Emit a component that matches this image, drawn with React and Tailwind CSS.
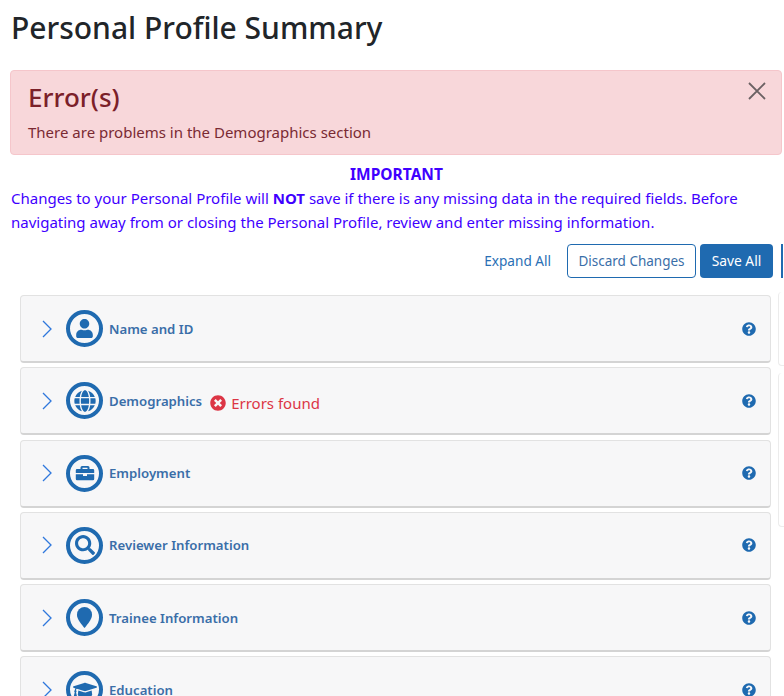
import React from "react";
import { FaUser, FaGlobe, FaSearch, FaGraduationCap, FaQuestionCircle, FaTimesCircle } from "react-icons/fa";

const Brief = () => (
  <svg viewBox="0 0 20 20" width="20" height="20" fill="#1f6ab0">
    <path d="M7 3h6a1.5 1.5 0 0 1 1.5 1.5V6H18a1.2 1.2 0 0 1 1.2 1.2V10H.8V7.200A1.2 1.2 0 0 1 2 6h3.500V4.500A1.500 1.500 0 0 1 7 3zm.5 1.800V6h5V4.800z" fillRule="evenodd" />
    <path d="M.8 11.200h7.200V13h4v-1.800h7.200V16a1.200 1.200 0 0 1-1.200 1.200H2A1.200 1.200 0 0 1 .8 16z" />
  </svg>
);
const Pin = () => (
  <svg viewBox="0 0 18 24" width="17" height="23" fill="#1f6ab0">
    <path d="M9 1a8 8 0 0 1 8 8c0 4.500-5 10.500-8 14C6 19.500 1 13.500 1 9a8 8 0 0 1 8-8z" />
  </svg>
);

const rows = [
  { t: "Name and ID", icon: <FaUser size={19} /> },
  { t: "Demographics", icon: <FaGlobe size={22} />, err: true },
  { t: "Employment", icon: <Brief /> },
  { t: "Reviewer Information", icon: <FaSearch size={20} /> },
  { t: "Trainee Information", icon: <Pin /> },
  { t: "Education", icon: <FaGraduationCap size={24} /> },
];

function Row({ r }) {
  return (
    <div className="flex items-center shrink-0 h-[68px] bg-[#f7f7f8] border border-[#e2e2e2] border-b-[2px] border-b-[#d4d4d4] rounded-[4px] pl-[21px] pr-[15px]">
      <svg width="10" height="18" viewBox="0 0 10 18" fill="none" stroke="#2f78dc" strokeWidth="1.300" className="shrink-0">
        <path d="M1 1l8 8-8 8" />
      </svg>
      <div className="ml-[14px] w-[37px] h-[37px] shrink-0 rounded-full border-[4px] border-[#1f6ab0] text-[#1f6ab0] flex items-center justify-center">
        {r.icon}
      </div>
      <span className="ml-[6px] text-[13.200px] font-semibold text-[#3a6ea8] relative top-[1px]">{r.t}</span>
      {r.err && (
        <span className="ml-[8px] flex items-center text-[15px] text-[#dc3545] relative top-[2px]">
          <FaTimesCircle size={16} className="mr-[5px]" />
          Errors found
        </span>
      )}
      <FaQuestionCircle size={14} className="ml-auto mr-[-1px] text-[#1f6ab0]" />
    </div>
  );
}

export default function App() {
  return (
    <div className="h-[696px] w-[784px] overflow-hidden bg-white text-[#212529]" style={{ fontFamily: '"Noto Sans", "Open Sans", sans-serif' }}>
      <h1 className="pl-[11px] pt-[6px] h-[70px] text-[30px] leading-[44px] font-medium text-[#212529]">Personal Profile Summary</h1>
      <div className="relative mx-[10px] h-[85px] w-[772px] bg-[#f8d7da] border border-[#f5c6cb] rounded-[4px] px-[17px] text-[#7a2a33]">
        <div className="pt-[7px] text-[26px] leading-[38px] font-medium text-[#7b2029]">Error(s)</div>
        <div className="mt-[5px] text-[15px] leading-[22px]">There are problems in the Demographics section</div>
        <svg width="18" height="18" viewBox="0 0 18 18" stroke="#6b6163" strokeWidth="1.800" className="absolute right-[15px] top-[11px]">
          <path d="M1 1l16 16M17 1L1 17" />
        </svg>
      </div>
      <div className="pt-[8px] px-[11px] text-[15px] text-[#3f00ff]">
        <div className="text-center font-bold pl-[9px] text-[15.500px] leading-[23px]">IMPORTANT</div>
        <div className="leading-[24px]">
          Changes to your Personal Profile will <b>NOT</b> save if there is any missing data in the required fields. Before navigating away from or closing the Personal Profile, review and enter missing information.
        </div>
      </div>
      <div className="mt-[10px] flex items-center justify-end h-[34px]">
        <span className="text-[13.600px] text-[#2a6fb5] mr-[16px]">Expand All</span>
        <span className="h-[34px] w-[129px] flex items-center justify-center rounded-[4px] border border-[#1f6ab0] text-[13.500px] text-[#3a6ea8] mr-[4px]">Discard Changes</span>
        <span className="h-[34px] w-[73px] flex items-center justify-center rounded-[4px] bg-[#1f6ab0] text-[13.800px] text-white mr-[8px]">Save All</span>
        <span className="h-[34px] w-[2px] bg-[#1f6ab0] mr-[1px]"></span>
      </div>
      <div className="flex mt-[17px]">
        <div className="ml-[20px] w-[751px] shrink-0 flex flex-col gap-[4.300px]">
          {rows.map((r) => <Row key={r.t} r={r} />)}
        </div>
        <div className="ml-[7px] flex-1 flex flex-col gap-[7px] mt-[-3px]">
          <div className="h-[74px] border-l border-b border-[#ececec] rounded-l-[4px]"></div>
          <div className="h-[154px] border-l border-b border-[#ececec] rounded-l-[4px]"></div>
        </div>
      </div>
    </div>
  );
}
